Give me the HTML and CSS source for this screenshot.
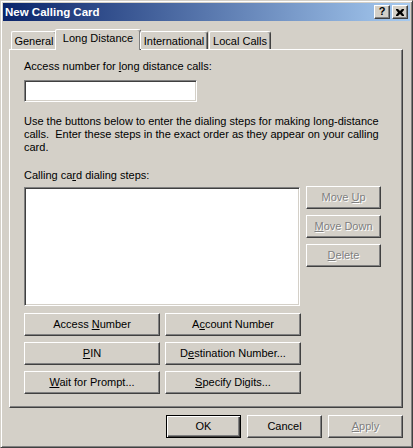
FILE: index.html
```html
<!DOCTYPE html>
<html>
<head>
<meta charset="utf-8">
<link rel="stylesheet" href="styles.css">
</head>
<body>
<div class="window">
  <div class="titlebar">
    <span class="title">New Calling Card</span>
    <div class="tbtns">
      <div class="tbtn help">?</div>
      <div class="tbtn close">
        <svg width="8" height="7" viewBox="0 0 8 7"><path d="M0 0h2l2 2 2-2h2v1L6 3.5 8 6v1H6L4 5 2 7H0V6l2-2.5L0 1z" fill="#000"/></svg>
      </div>
    </div>
  </div>
  <div class="client">
    <div class="tabs">
      <div class="tab t1">General</div>
      <div class="tab t2 sel">Long Distance</div>
      <div class="tab t3">International</div>
      <div class="tab t4">Local Calls</div>
    </div>
    <div class="panel">
      <div class="lbl">Access number for <u>l</u>ong distance calls:</div>
      <div class="edit"></div>
      <p class="para">Use the buttons below to enter the dialing steps for making long-distance<br>calls.&nbsp; Enter these steps in the exact order as they appear on your calling<br>card.</p>
      <div class="lbl lbl2">Calling ca<u>r</u>d dialing steps:</div>
      <div class="listrow">
        <div class="listbox"></div>
        <div class="sidebtns">
          <div class="btn dis"><span>Move <u>U</u>p</span></div>
          <div class="btn dis"><span><u>M</u>ove Down</span></div>
          <div class="btn dis"><span><u>D</u>elete</span></div>
        </div>
      </div>
      <div class="grid">
        <div class="btn wide"><span>Access <u>N</u>umber</span></div>
        <div class="btn wide"><span>A<u>c</u>count Number</span></div>
        <div class="btn wide"><span><u>P</u>IN</span></div>
        <div class="btn wide"><span>D<u>e</u>stination Number...</span></div>
        <div class="btn wide"><span><u>W</u>ait for Prompt...</span></div>
        <div class="btn wide"><span><u>S</u>pecify Digits...</span></div>
      </div>
    </div>
    <div class="footer">
      <div class="btn def"><span>OK</span></div>
      <div class="btn"><span>Cancel</span></div>
      <div class="btn dis"><span><u>A</u>pply</span></div>
    </div>
  </div>
</div>
</body>
</html>
```

FILE: styles.css
```css
* { box-sizing: border-box; }
html, body { margin: 0; padding: 0; background: #d4d0c8; }
body { font-family: "Liberation Sans", Arial, sans-serif; font-size: 11px; line-height: 13px; color: #000; }
u { text-decoration: underline; text-underline-offset: 1px; }

.window {
  width: 413px; height: 448px;
  background: #d4d0c8;
  border: 1px solid; border-color: #d4d0c8 #404040 #404040 #d4d0c8;
  box-shadow: inset 1px 1px #fff, inset -1px -1px #808080;
  padding: 2px;
}
.titlebar {
  height: 18px;
  background: linear-gradient(to right, #0a246a, #a6caf0);
  display: flex; align-items: center; justify-content: space-between;
  padding-left: 2px; padding-right: 2px;
}
.title { color: #fff; font-weight: bold; font-size: 11.5px; font-family: "Liberation Sans", Arial, sans-serif; }
.tbtns { display: flex; gap: 2px; }
.tbtn {
  width: 16px; height: 14px; background: #d4d0c8;
  border: 1px solid; border-color: #fff #404040 #404040 #fff;
  box-shadow: inset -1px -1px #808080;
  display: flex; align-items: center; justify-content: center;
}
.help { font-weight: bold; font-size: 11px; line-height: 11px; font-family: "Liberation Sans", sans-serif; padding-bottom: 1px; }
.client { padding: 8px 7px 0 6px; }

.tabs { display: flex; height: 20px; padding-left: 2px; position: relative; z-index: 1; align-items: flex-end; }
.tab {
  height: 18px;
  border: 1px solid; border-bottom: none;
  border-color: #fff #404040 transparent #fff;
  box-shadow: inset -1px 0 #808080;
  border-radius: 2px 3px 0 0;
  display: flex; align-items: center; justify-content: center;
  padding-top: 1px;
}
.t1 { width: 46px; }
.t2 { width: 86px; }
.t3 { width: 68px; }
.t4 { width: 62px; margin-left: 1px; }
.tab.sel { height: 21px; margin: 0 -1px -1px -2px; background: #d4d0c8; padding-top: 0; padding-bottom: 3px; }

.panel {
  height: 359px;
  border: 1px solid; border-color: #fff #404040 #404040 #fff;
  box-shadow: inset -1px -1px #808080;
  padding: 10px 14px 0 14px;
}
.lbl { height: 13px; }
.edit {
  width: 173px; height: 22px; margin-top: 7px; background: #fff;
  border: 1px solid; border-color: #808080 #fff #fff #808080;
  box-shadow: inset 1px 1px #404040, inset -1px -1px #d4d0c8;
}
.para { margin: 13px 0 0 0; }
.lbl2 { margin-top: 15px; }
.listrow { display: flex; margin-top: 5px; align-items: flex-start; }
.listbox {
  width: 276px; height: 119px; background: #fff;
  border: 1px solid; border-color: #808080 #fff #fff #808080;
  box-shadow: inset 1px 1px #404040, inset -1px -1px #d4d0c8;
}
.sidebtns { display: flex; flex-direction: column; gap: 6px; margin-left: 6px; margin-top: -1px; }

.btn {
  width: 75px; height: 23px; background: #d4d0c8;
  border: 1px solid; border-color: #fff #404040 #404040 #fff;
  box-shadow: inset -1px -1px #808080;
  display: flex; align-items: center; justify-content: center;
  white-space: nowrap;
}
.btn.dis { color: #808080; text-shadow: 1px 1px 0 #fff; }
.grid { display: grid; grid-template-columns: 136px 136px; column-gap: 5px; row-gap: 6px; margin-top: 7px; }
.btn.wide { width: 136px; }

.footer { display: flex; justify-content: flex-end; gap: 6px; margin-top: 7px; }
.btn.def {
  border: 1px solid #000;
  box-shadow: inset 1px 1px #fff, inset -1px -1px #404040, inset -2px -2px #808080;
}
```
